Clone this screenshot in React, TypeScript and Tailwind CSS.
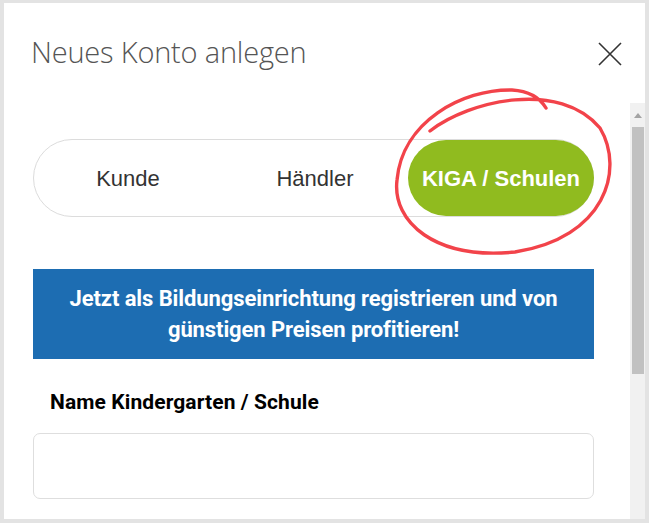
export default function App() {
  const tabs = ["Kunde", "Händler", "KIGA / Schulen"];
  const active = 2;

  return (
    <div className="relative w-[649px] h-[523px] bg-white border-[#e3e3e3] border-l-4 border-r-4 border-t-[3px] border-b-4 flex flex-col overflow-hidden">
      {/* Header */}
      <div className="h-[100px] flex items-start justify-between pl-[27px] pr-[23px] pt-[34px]">
        <h2 className="text-[29px] font-light text-[#555] leading-none tracking-[-0.2px] [font-family:'Open_Sans',sans-serif]">
          Neues Konto anlegen
        </h2>
        <svg width="24" height="24" viewBox="0 0 24 24" className="mt-[5px] text-[#333]">
          <path d="M1 1 L23 23 M23 1 L1 23" stroke="currentColor" strokeWidth="1.6" />
        </svg>
      </div>

      {/* Body */}
      <div className="flex-1 flex min-h-0">
        <div className="flex-1 pl-[29px] pr-[36px] pt-[36px] [font-family:'Liberation_Sans',Arial,sans-serif]">
          {/* Segment switch */}
          <div className="h-[78px] rounded-full border border-[#dcdcdc] flex items-center">
            {tabs.map((t, i) => (
              <div
                key={t}
                className={`h-full flex items-center justify-center text-[22px] ${
                  i === active
                    ? "w-[186px] ml-auto -mr-px rounded-full bg-[#90bb1f] text-white font-bold"
                    : i === 0
                    ? "w-[188px] text-[#333]"
                    : "w-[186px] text-[#333]"
                }`}
              >
                {t}
              </div>
            ))}
          </div>

          {/* Info banner */}
          <div className="mt-[52px] h-[90px] bg-[#1d6db2] flex items-center justify-center px-4 text-center text-white font-bold text-[22px] leading-[31px] tracking-[-0.1px] [font-family:Roboto,sans-serif]">
            Jetzt als Bildungseinrichtung registrieren und von günstigen Preisen profitieren!
          </div>

          <label className="block mt-[30px] pl-[17px] text-[21px] font-bold text-black leading-[26px] tracking-[0.1px] [font-family:Roboto,sans-serif]">
            Name Kindergarten / Schule
          </label>

          <input className="mt-[18px] w-full h-[66px] rounded-[7px] border border-[#dedede] outline-none" />
        </div>

        {/* Scrollbar */}
        <div className="w-[15px] bg-[#f1f1f1] flex flex-col items-center">
          <div className="h-[24px] flex items-center justify-center">
            <div className="w-0 h-0 border-l-[4px] border-r-[4px] border-b-[5px] border-l-transparent border-r-transparent border-b-[#a3a3a3]" />
          </div>
          <div className="w-[12px] h-[247px] bg-[#c1c1c1]" />
        </div>
      </div>

      {/* Hand-drawn annotation */}
      <svg
        className="absolute left-[-4px] top-[-3px] pointer-events-none"
        width="649"
        height="523"
        viewBox="0 0 649 523"
        fill="none"
      >
        <path
          d="M 430 131 C 470 100, 560 80, 600 128 C 625 170, 605 238, 515 252 C 435 260, 392 222, 397 180 C 402 122, 462 89, 512 90 C 528 91, 540 98, 546 108"
          stroke="#f2434a"
          strokeWidth="3.4"
          strokeLinecap="round"
        />
      </svg>
    </div>
  );
}
